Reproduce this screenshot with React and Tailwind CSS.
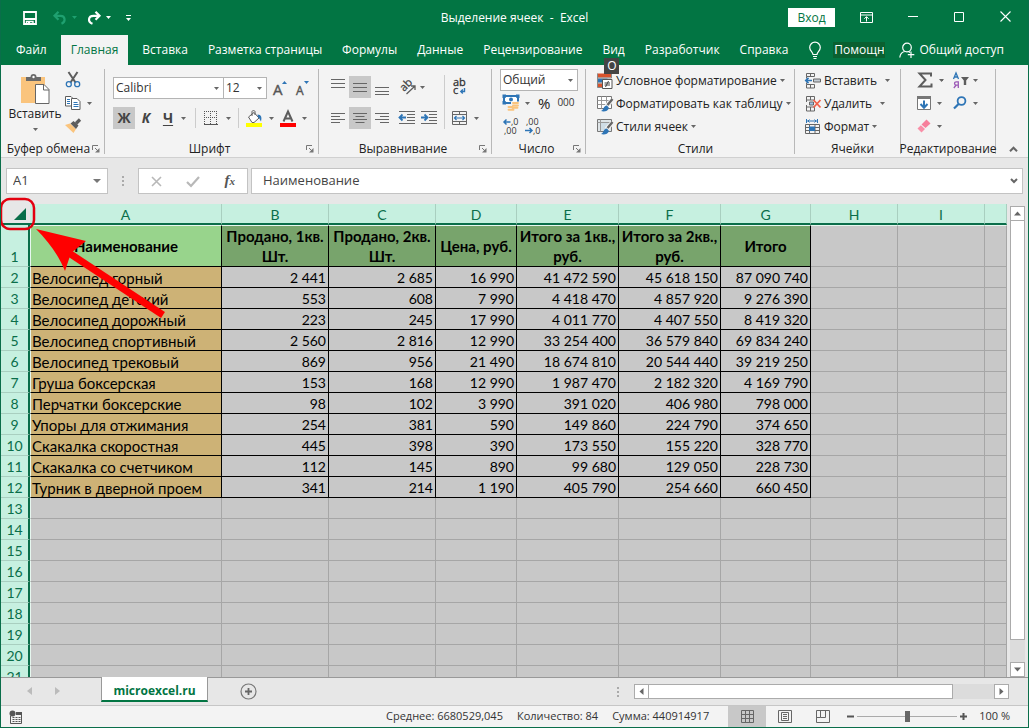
import React from 'react';

const TABS = [
  'Файл',
  'Главная',
  'Вставка',
  'Разметка страницы',
  'Формулы',
  'Данные',
  'Рецензирование',
  'Вид',
  'Разработчик',
  'Справка'
];

const COLUMNS = [
  { key: 'A', width: 'w-[192px]' },
  { key: 'B', width: 'w-[107px]' },
  { key: 'C', width: 'w-[107px]' },
  { key: 'D', width: 'w-[81px]' },
  { key: 'E', width: 'w-[102px]' },
  { key: 'F', width: 'w-[102px]' },
  { key: 'G', width: 'w-[90px]' },
  { key: 'H', width: 'w-[87px]' },
  { key: 'I', width: 'w-[87px]' },
  { key: '', width: '' }
];

const TITLES = [
  'Наименование',
  'Продано, 1кв. Шт.',
  'Продано, 2кв. Шт.',
  'Цена, руб.',
  'Итого за 1кв., руб.',
  'Итого за 2кв., руб.',
  'Итого'
];

const DATA = [
  ['Велосипед горный', '2 441', '2 685', '16 990', '41 472 590', '45 618 150', '87 090 740'],
  ['Велосипед детский', '553', '608', '7 990', '4 418 470', '4 857 920', '9 276 390'],
  ['Велосипед дорожный', '223', '245', '17 990', '4 011 770', '4 407 550', '8 419 320'],
  ['Велосипед спортивный', '2 560', '2 816', '12 990', '33 254 400', '36 579 840', '69 834 240'],
  ['Велосипед трековый', '869', '956', '21 490', '18 674 810', '20 544 440', '39 219 250'],
  ['Груша боксерская', '153', '168', '12 990', '1 987 470', '2 182 320', '4 169 790'],
  ['Перчатки боксерские', '98', '102', '3 990', '391 020', '406 980', '798 000'],
  ['Упоры для отжимания', '254', '381', '590', '149 860', '224 790', '374 650'],
  ['Скакалка скоростная', '445', '398', '390', '173 550', '155 220', '328 770'],
  ['Скакалка со счетчиком', '112', '145', '890', '99 680', '129 050', '228 730'],
  ['Турник в дверной проем', '341', '214', '1 190', '405 790', '254 660', '660 450']
];

const LAST_ROW = 21;

/* ---------- icons ---------- */

function Icon({ w = 16, h = 16, children, className = '' }) {
  return (
    <svg
      width={w}
      height={h}
      viewBox={`0 0 ${w} ${h}`}
      fill="none"
      aria-hidden="true"
      className={'block shrink-0 overflow-visible ' + className}
    >
      {children}
    </svg>
  );
}

function Caret({ className = 'text-[#666]' }) {
  return (
    <Icon w={5} h={3} className={className}>
      <path d="M0 0h5L2.5 3z" fill="currentColor" />
    </Icon>
  );
}

function SaveIcon() {
  return (
    <Icon w={14} h={14}>
      <path d="M1 1h12v12H1z" stroke="#fff" strokeWidth="1.8" />
      <path d="M1 7h12v2H1z" fill="#fff" />
      <path d="M3.5 13.5v-3h6.5v3" stroke="#fff" strokeWidth="1.4" />
      <path d="M5 11h2v2H5z" fill="#fff" />
    </Icon>
  );
}

function UndoIcon() {
  return (
    <Icon w={14} h={14}>
      <path d="M5.5 .8 1.5 4.8l4 4M2 4.8h5.5c5 0 5.5 6 1 8" stroke="#1fa070" strokeWidth="2.2" />
    </Icon>
  );
}

function RedoIcon() {
  return (
    <Icon w={14} h={14}>
      <path d="M8.5 .8 12.5 4.8 8.5 8.8M12 4.8H6.5C1 4.8 .5 10.8 5.5 12.8" stroke="#fff" strokeWidth="2.2" />
    </Icon>
  );
}

function PasteIcon() {
  return (
    <Icon w={28} h={31}>
      <path d="M0 4h24v26H0z" fill="#fac47d" />
      <path d="M5 8V4h4.5a3 3 0 0 1 6 0H20v4z" fill="#6a6a6a" />
      <circle cx="12.5" cy="4" r="1.2" fill="#fff" />
      <path d="M14.5 11.5H23l5 5v14H14.5z" fill="#fff" stroke="#666" />
      <path d="M22.5 11.5V17H28" stroke="#666" />
    </Icon>
  );
}

function CutIcon() {
  return (
    <Icon>
      <path d="M3.5 0 10.5 10.5M12.5 0 5.5 10.5" stroke="#5d5d5d" strokeWidth="2" />
      <circle cx="3.8" cy="12.2" r="2.5" stroke="#2e75b6" strokeWidth="1.3" />
      <circle cx="12.2" cy="12.2" r="2.5" stroke="#2e75b6" strokeWidth="1.3" />
    </Icon>
  );
}

function CopyIcon() {
  return (
    <Icon>
      <path d="M.5 1.5H6l2 2V11H.5z" fill="#fff" stroke="#5d5d5d" />
      <path d="M2 4.5h3M2 6.5h3M2 8.5h3" stroke="#2e75b6" />
      <path d="M6.5 3.5H12l3 3v8H6.5z" fill="#fff" stroke="#5d5d5d" />
      <path d="M8.5 7.5h4M8.5 9.5h5M8.5 11.5h5" stroke="#2e75b6" />
    </Icon>
  );
}

function BrushIcon() {
  return (
    <Icon>
      <path d="M0 7 5 5.5 11 11 8.5 15z" fill="#fac47d" />
      <path d="m5.5 5.500 3-2.500 5 4.500-2.500 3.500z" fill="#5d5d5d" />
      <path d="m11 5.500 4-4" stroke="#5d5d5d" strokeWidth="3.2" />
    </Icon>
  );
}

function GrowFontIcon() {
  return (
    <Icon w={14} h={16}>
      <text x="0" y="15" fontSize="15" fill="#555" stroke="#555" strokeWidth=".4">
        A
      </text>
      <path d="M9 4h5l-2.500-3z" fill="#2e75b6" />
    </Icon>
  );
}

function ShrinkFontIcon() {
  return (
    <Icon w={14} h={16}>
      <text x="1" y="15" fontSize="12" fill="#555" stroke="#555" strokeWidth=".4">
        A
      </text>
      <path d="M9 1h5l-2.500 3z" fill="#2e75b6" />
    </Icon>
  );
}

function BordersIcon() {
  return (
    <Icon w={14} h={14}>
      <path
        d="M0 .5h13M.5 0v13M12.5 0v13M6.5 0v13M0 6.5h13"
        stroke="#555"
        strokeDasharray="1 1"
      />
      <path d="M0 13.5h14" stroke="#555" />
    </Icon>
  );
}

function FillColorIcon() {
  return (
    <Icon w={17} h={17}>
      <path d="M2.5 7 8 2.5 13 8 8 12.5H6z" fill="#fff" stroke="#5d5d5d" />
      <path d="M6 6V1.5C6 .3 9 .3 9 1.5V5" stroke="#5d5d5d" />
      <path d="M11.5 4.5c4 0 4.5 3 3.500 7-1-1-1-3-3-4.500z" fill="#2e75b6" />
      <path d="M0 13h16v4H0z" fill="#ffff00" />
    </Icon>
  );
}

function FontColorIcon() {
  return (
    <Icon w={16} h={17}>
      <path d="M3.5 11.5 8 1.5l4.500 10M5 8.500h6" stroke="#5d5d5d" strokeWidth="2" />
      <path d="M0 13h16v4H0z" fill="#ff0000" />
    </Icon>
  );
}

function LinesIcon({ d }) {
  return (
    <Icon w={14}>
      <path d={d} stroke="#666" />
    </Icon>
  );
}

function OrientationIcon() {
  return (
    <Icon w={17} h={16}>
      <text fontSize="11" fill="#444" stroke="#444" strokeWidth=".3" transform="translate(5 13) rotate(-45)">
        ab
      </text>
      <path d="M7.500 15 15.500 7.500M12 7h4v4" stroke="#5d5d5d" strokeWidth="1.3" />
    </Icon>
  );
}

function WrapIcon() {
  return (
    <Icon w={14} h={16}>
      <text fontSize="11" fill="#333" stroke="#333" strokeWidth=".3">
        <tspan x="0" y="7">
          ab
        </tspan>
        <tspan x="0" y="15">
          c
        </tspan>
      </text>
      <path d="M11.5 9v3.5H8M9.800 10.500l-2 2 2 2" stroke="#2e75b6" strokeWidth="1.4" />
    </Icon>
  );
}

function IndentIcon({ right }) {
  return (
    <Icon>
      <path d="M0 1.5h16M8 4.5h8M8 7.5h8M8 10.5h8M0 13.5h16" stroke="#666" />
      <path
        d={right ? 'M0 7.5h6M3.5 4.5l3 3-3 3' : 'M1 7.5h6M3.5 4.5l-3 3 3 3'}
        stroke="#2e75b6"
        strokeWidth="1.8"
      />
    </Icon>
  );
}

function MergeIcon() {
  return (
    <Icon>
      <path d="M.5 1.5h14v13H.5zM.5 4.5h14M.5 11.5h14M7.5 1.5v3M7.5 11.5v3" stroke="#666" />
      <path d="M2.5 8h10M4.5 6l-2 2 2 2M10.5 6l2 2-2 2" stroke="#2e75b6" strokeWidth="1.2" />
    </Icon>
  );
}

function CurrencyIcon() {
  return (
    <Icon>
      <path d="M1 1h14v7H1z" fill="#fff" stroke="#2e75b6" strokeWidth="2" />
      <path d="M1 3V1h2M13 1h2v2M1 6v2h2" stroke="#2e75b6" strokeWidth="3" />
      <circle cx="8" cy="4.5" r="2" fill="#2e75b6" />
      <path d="M8 6.5h8V15H4v-4h4z" fill="#f3f3f3" />
      <path
        d="M10 8h5M10 10.500h5M5.500 12h4M9.500 12.800h5M5.500 14.800h5"
        stroke="#fac47d"
        strokeWidth="1.9"
        strokeLinecap="round"
      />
    </Icon>
  );
}

function DecimalIcon({ more }) {
  return (
    <Icon>
      <text fontSize="9" fill="#333">
        <tspan x={more ? 8 : 1} y="7">
          {more ? ',0' : ',00'}
        </tspan>
        <tspan x={more ? 1 : 8} y="16">
          {more ? ',00' : ',0'}
        </tspan>
      </text>
      <path
        d={more ? 'M1 4h6.500M3.500 1.500 1 4l2.500 2.500' : 'M0 12.500h7M4.500 10l2.500 2.500L4.500 15'}
        stroke="#2e75b6"
        strokeWidth="1.5"
      />
    </Icon>
  );
}

function ConditionalIcon() {
  return (
    <Icon>
      <path d="M.5 .5h14v4H.5zM.5 10.5h5v4h-5z" fill="#d9532c" />
      <path d="M.5 5.5h10v4H.5z" fill="#2e75b6" />
      <path d="M.5 5h14M.5 10h5M.5 .5v14h5M14.5 1v4" stroke="#888" />
      <path d="M5.5 6.5H15v9H5.5z" fill="#fff" stroke="#555" />
      <path d="M7.5 10H13M7.5 12H13M11.5 8l-3 6" stroke="#444" />
    </Icon>
  );
}

function TableBrushIcon({ filled }) {
  return (
    <Icon>
      <path d="M.5 .5h14v12H.5z" fill={filled ? '#dfe5e8' : '#fff'} stroke="#777" />
      <path
        d={filled ? 'M.5 3.5h14M3.5 .5v12' : 'M.5 4.5h14M.5 8.5h14M4.5 .5v12M9.5 .5v12'}
        stroke="#999"
      />
      {filled ? <path d="M4 4h8v7H4z" fill="#cfdde6" /> : null}
      <path d="m9.500 10 6-6.500" stroke="#f3f3f3" strokeWidth="4.5" />
      <path d="m10.500 9 5-6" stroke="#666" strokeWidth="2.4" />
      <path d="M4 15c2.500-.5 2.500-5.500 6-5.500l2 2.500C11 15.500 6.500 16 4 15z" fill="#2e75b6" />
    </Icon>
  );
}

function InsertCellsIcon() {
  return (
    <Icon>
      <path
        d="M1.500 .5h8v3h-8zM5.500 .5v3M1.500 11.500h8V15h-8zM5.500 11.500V15M1.500 3.500v2M1.500 9.500v2"
        stroke="#666"
      />
      <path d="M8.500 6h7v3h-7z" fill="#c3ccd4" stroke="#666" />
      <path d="M1 7.500h6M3.500 4.800.8 7.500l2.700 2.700" stroke="#2e75b6" strokeWidth="1.7" />
    </Icon>
  );
}

function DeleteCellsIcon() {
  return (
    <Icon>
      <path d="M1.500 .5h8V4h-8zM5.500 .5V4M1.500 11h8v4h-8zM5.500 11v4M1.500 4v2M1.500 9v2" stroke="#666" />
      <path d="M4.500 6h4v3h-4z" fill="#9dc3e6" stroke="#666" />
      <path d="m8.500 4 7 7.500M15.500 4l-7 7.500" stroke="#f0614a" strokeWidth="1.8" />
    </Icon>
  );
}

function FormatCellsIcon() {
  return (
    <Icon>
      <path
        d="M1.500 0v4M12.500 0v4M2 2h10M4.500 .5 3 2l1.500 1.500M9.500 .5 11 2 9.500 3.500"
        stroke="#2e75b6"
      />
      <path d="M.5 5.500h14v9H.5zM.5 8.500h14M.5 11.500h14M4.500 5.500v9M10 5.500v9" stroke="#666" />
      <path d="M4 7.500h6V12H4z" fill="#2e75b6" />
    </Icon>
  );
}

function SumIcon() {
  return (
    <Icon>
      <path d="M14 4.500v-3H2.500L8.500 8l-6 6.500h12v-3" stroke="#5d5d5d" strokeWidth="2" />
    </Icon>
  );
}

function SortFilterIcon() {
  return (
    <Icon>
      <path d="M.5 7 3 1l2.500 6M1.500 5h3" stroke="#2e75b6" strokeWidth="1.3" />
      <path
        d="M5.300 16V9.800H3.200a1.600 1.600 0 0 0 0 3.300h2M3.300 13 .8 16"
        stroke="#9b59b6"
        strokeWidth="1.3"
      />
      <path d="M8 5h8l-2.800 3.500V13h-2.400V8.500z" fill="#5d5d5d" />
    </Icon>
  );
}

function FillDownIcon() {
  return (
    <Icon w={14}>
      <path d="M.5 1.500h13v13H.5z" fill="#fff" stroke="#777" />
      <path d="M0 1h14v3H0z" fill="#777" />
      <path d="M7 5.500v7M3.500 9 7 12.700 10.500 9" stroke="#2e75b6" strokeWidth="2" />
    </Icon>
  );
}

function FindIcon() {
  return (
    <Icon w={14}>
      <circle cx="8.5" cy="6" r="3.9" stroke="#2e75b6" strokeWidth="1.8" />
      <path d="M5.800 8.800 1 13.500" stroke="#2e75b6" strokeWidth="2.2" />
    </Icon>
  );
}

function EraserIcon() {
  return (
    <Icon w={14}>
      <path d="M4.500 6.500 9.500 1.500 13.500 5.500 8.500 10z" fill="#f77f9b" />
      <path d="M3.900 7.200.5 10.500l4 4L8 11z" fill="#f98fa8" />
    </Icon>
  );
}

function DialogLauncher({ label }) {
  return (
    <button type="button" aria-label={label}>
      <Icon w={8} h={8}>
        <path d="M.5 5V.5H6M3 3l3.500 3.500" stroke="#777" />
        <path d="M7.500 3v4.500H3z" fill="#777" />
      </Icon>
    </button>
  );
}

/* ---------- small controls ---------- */

function IconButton({ label, children, caret = false, active = false, gap = 'gap-[6px]', className = '' }) {
  return (
    <button
      type="button"
      aria-label={label}
      className={
        'flex h-[22px] shrink-0 items-center justify-center ' +
        gap +
        ' ' +
        (active ? 'bg-[#c8c8c8] ' : '') +
        className
      }
    >
      {children}
      {caret ? <Caret /> : null}
    </button>
  );
}

function Combo({ label, value, className }) {
  return (
    <div
      className={
        'flex h-[22px] shrink-0 items-center border border-[#b4b4b4] bg-white pr-1 ' + className
      }
    >
      <select
        aria-label={label}
        defaultValue={value}
        className="min-w-0 flex-1 appearance-none bg-transparent pl-[2px] text-[#333] outline-none"
      >
        <option>{value}</option>
      </select>
      <Caret />
    </div>
  );
}

function TextCommand({ icon, label, wide = false }) {
  return (
    <button type="button" className="flex h-[23px] items-center whitespace-nowrap">
      {icon}
      <span className="ml-[3px]">{label}</span>
      <span className={wide ? 'ml-2' : 'ml-[3px]'}>
        <Caret />
      </span>
    </button>
  );
}

function Group({ title, launcher, className, children }) {
  return (
    <section className={'flex shrink-0 flex-col border-r border-[#b8b8b8] ' + className}>
      <div className="flex-1">{children}</div>
      <div className="flex h-[10px] items-center justify-center">
        <h2 className="grow text-center leading-[10px] whitespace-nowrap">{title}</h2>
        {launcher ? <DialogLauncher label={'Параметры: ' + title} /> : null}
      </div>
    </section>
  );
}

/* ---------- window parts ---------- */

function TitleBar() {
  return (
    <header className="grid h-[35px] grid-cols-[1fr_auto_1fr] items-center text-white">
      <div className="flex items-center pl-[22px]">
        <button type="button" aria-label="Сохранить">
          <SaveIcon />
        </button>
        <button type="button" aria-label="Отменить" className="ml-4 flex items-center gap-[5px]">
          <UndoIcon />
          <Caret className="text-[#1fa070]" />
        </button>
        <button type="button" aria-label="Вернуть" className="ml-[10px] flex items-center gap-[5px]">
          <RedoIcon />
          <Caret className="text-white" />
        </button>
        <button type="button" aria-label="Настройка панели" className="ml-[15px]">
          <Icon w={5} h={6}>
            <path d="M0 .5h5" stroke="#fff" />
            <path d="M0 3h5L2.500 6z" fill="#fff" />
          </Icon>
        </button>
      </div>
      <h1 className="whitespace-pre">Выделение ячеек  -  Excel</h1>
      <div className="flex h-full items-center justify-end">
        <button type="button" className="mr-[9px] h-[19px] w-[47px] bg-white text-[#027543]">
          Вход
        </button>
        <button type="button" aria-label="Лента" className="flex h-full w-[46px] items-center justify-center">
          <Icon w={14} h={12}>
            <path d="M.5 .5h12v10H.5zM.5 3h12M6.500 9.500V5M4.300 6.800 6.500 4.600l2.200 2.200" stroke="#fff" />
          </Icon>
        </button>
        <button type="button" aria-label="Свернуть" className="flex h-full w-[46px] items-center justify-center">
          <Icon w={10} h={12}>
            <path d="M0 4.500h10" stroke="#fff" />
          </Icon>
        </button>
        <button type="button" aria-label="Развернуть" className="flex h-full w-[46px] items-center justify-center">
          <Icon w={10} h={12}>
            <path d="M.5 .5h9v9h-9z" stroke="#fff" />
          </Icon>
        </button>
        <button type="button" aria-label="Закрыть" className="flex h-full w-[46px] items-center justify-center">
          <Icon w={11} h={13}>
            <path d="m.5 .5 10 10M10.500 .5l-10 10" stroke="#fff" strokeWidth="1.1" />
          </Icon>
        </button>
      </div>
    </header>
  );
}

function TabBar() {
  return (
    <nav className="flex h-[30px] items-stretch pl-[5px] whitespace-nowrap text-white">
      {TABS.map((tab) => (
        <a
          key={tab}
          href="#"
          className={
            'relative flex items-center px-[10px] ' +
            (tab === 'Главная' ? 'mx-1 bg-[#f3f3f3] text-[#027543]' : '')
          }
        >
          {tab}
          {tab === 'Вид' ? (
            <kbd className="absolute top-[23px] left-3 z-10 flex h-4 w-[15px] items-center justify-center bg-[#444] font-[inherit] text-white">
              О
            </kbd>
          ) : null}
        </a>
      ))}
      <label className="ml-[11px] flex items-center gap-3">
        <Icon w={12} h={17}>
          <path
            d="M4 12.500c0-2.500-3.300-3.500-3.300-7a5.300 5.300 0 0 1 10.600 0c0 3.500-3.300 4.500-3.300 7zM4 14.500h4M4.500 16.500h3"
            stroke="#fff"
            strokeWidth="1.2"
          />
        </Icon>
        <input
          aria-label="Помощник"
          defaultValue="Помощн"
          className="h-4 w-[52px] bg-[#0a6030] px-px text-white outline-none"
        />
      </label>
      <button type="button" className="mr-6 ml-auto flex items-center gap-1">
        <Icon>
          <circle cx="8" cy="5.5" r="4.3" stroke="#fff" strokeWidth="1.2" />
          <path
            d="M.8 15.500c.4-3.500 2.200-5.500 5-6M9.500 9.500l1.500 1M12 9.500V16M8.800 12.700h6.500"
            stroke="#fff"
            strokeWidth="1.2"
          />
        </Icon>
        Общий доступ
      </button>
    </nav>
  );
}

function Ribbon() {
  return (
    <div className="flex h-[93px] items-stretch border-b border-[#d0d0d0] bg-[#f3f3f3] pt-1 pb-[3px] text-[#222]">
      <Group title="Буфер обмена" launcher className="w-[104px] pr-1 pl-1">
        <div className="flex justify-between">
          <button type="button" className="flex w-[60px] flex-col items-center pt-1">
            <PasteIcon />
            <span className="leading-[20px]">Вставить</span>
            <span className="mt-1">
              <Caret />
            </span>
          </button>
          <div className="flex flex-1 flex-col items-start">
            <IconButton label="Вырезать">
              <CutIcon />
            </IconButton>
            <IconButton label="Копировать" caret className="mt-[1px]">
              <CopyIcon />
            </IconButton>
            <IconButton label="Формат по образцу" className="mt-[1px]">
              <BrushIcon />
            </IconButton>
          </div>
        </div>
      </Group>

      <Group title="Шрифт" launcher className="w-[214px] pr-1 pl-2">
        <div className="flex pt-2">
          <Combo label="Шрифт" value="Calibri" className="w-[111px]" />
          <Combo label="Размер" value="12" className="w-[43px] border-l-0" />
          <IconButton label="Увеличить размер" className="ml-[2px] w-[22px]">
            <GrowFontIcon />
          </IconButton>
          <IconButton label="Уменьшить размер" className="w-[22px]">
            <ShrinkFontIcon />
          </IconButton>
        </div>
        <div className="flex items-center pt-2 text-sm font-bold text-[#444]">
          <IconButton label="Полужирный" active className="w-[22px]">
            Ж
          </IconButton>
          <IconButton label="Курсив" className="w-[22px] italic">
            К
          </IconButton>
          <IconButton label="Подчеркнутый" caret gap="gap-2" className="w-[35px]">
            <span className="underline underline-offset-2">Ч</span>
          </IconButton>
          <span className="mr-2 ml-[3px] h-5 w-px bg-[#ccc]" />
          <IconButton label="Границы" caret gap="gap-2">
            <BordersIcon />
          </IconButton>
          <span className="mx-[7px] h-5 w-px bg-[#ccc]" />
          <IconButton label="Цвет заливки" caret>
            <FillColorIcon />
          </IconButton>
          <IconButton label="Цвет текста" caret className="ml-[6px]">
            <FontColorIcon />
          </IconButton>
        </div>
      </Group>

      <Group title="Выравнивание" launcher className="w-[173px] pr-1 pl-2">
        <div className="flex">
          <div className="pt-[7px]">
            <div className="flex">
              <IconButton label="По верхнему краю" className="w-[22px]">
                <LinesIcon d="M0 .5h14M0 4.500h14M0 8.500h14" />
              </IconButton>
              <IconButton label="По середине" active className="w-[22px]">
                <LinesIcon d="M0 4.500h14M0 8.500h14M0 12.500h14" />
              </IconButton>
              <IconButton label="По нижнему краю" className="w-[22px]">
                <LinesIcon d="M0 8.500h14M0 12.500h14M0 15.500h14" />
              </IconButton>
              <IconButton label="Ориентация" caret gap="gap-1" className="ml-[6px]">
                <OrientationIcon />
              </IconButton>
            </div>
            <div className="flex pt-[9px]">
              <IconButton label="По левому краю" className="w-[22px]">
                <LinesIcon d="M0 3.500h14M0 6.500h9M0 9.500h14M0 12.500h9" />
              </IconButton>
              <IconButton label="По центру" active className="w-[22px]">
                <LinesIcon d="M0 3.500h14M2.500 6.500h9M0 9.500h14M2.500 12.500h9" />
              </IconButton>
              <IconButton label="По правому краю" className="w-[22px]">
                <LinesIcon d="M0 3.500h14M5 6.500h9M0 9.500h14M5 12.500h9" />
              </IconButton>
              <IconButton label="Уменьшить отступ" className="ml-[3px] w-[22px]">
                <IndentIcon />
              </IconButton>
              <IconButton label="Увеличить отступ" className="w-[22px]">
                <IndentIcon right />
              </IconButton>
            </div>
          </div>
          <span className="mt-[6px] ml-1 w-px bg-[#ccc]" />
          <div className="flex flex-col items-start pt-[7px] pl-[7px]">
            <IconButton label="Перенести текст" className="w-4">
              <WrapIcon />
            </IconButton>
            <IconButton label="Объединить" caret className="mt-[9px]">
              <MergeIcon />
            </IconButton>
          </div>
        </div>
      </Group>

      <Group title="Число" launcher className="w-[94px] pr-1 pl-2">
        <Combo label="Числовой формат" value="Общий" className="w-[78px]" />
        <div className="flex pt-[1px] pl-[3px]">
          <IconButton label="Денежный формат" caret>
            <CurrencyIcon />
          </IconButton>
          <IconButton label="Процентный формат" className="ml-2 text-[15px]">
            %
          </IconButton>
          <IconButton label="Формат с разделителями" className="ml-[7px] text-[10px] text-[#333]">
            000
          </IconButton>
        </div>
        <div className="flex gap-[6px] pt-[1px] pl-[3px]">
          <IconButton label="Увеличить разрядность">
            <DecimalIcon more />
          </IconButton>
          <IconButton label="Уменьшить разрядность">
            <DecimalIcon />
          </IconButton>
        </div>
      </Group>

      <Group title="Стили" className="w-[209px] pl-[11px]">
        <TextCommand icon={<ConditionalIcon />} label="Условное форматирование" />
        <TextCommand icon={<TableBrushIcon />} label="Форматировать как таблицу" />
        <TextCommand icon={<TableBrushIcon filled />} label="Стили ячеек" />
      </Group>

      <Group title="Ячейки" className="w-[106px] pl-[10px]">
        <TextCommand icon={<InsertCellsIcon />} label="Вставить" wide />
        <TextCommand icon={<DeleteCellsIcon />} label="Удалить" wide />
        <TextCommand icon={<FormatCellsIcon />} label="Формат" />
      </Group>

      <Group title="Редактирование" className="w-[95px]">
        <div className="flex gap-[9px] pl-4">
          <div>
            <IconButton label="Сумма" caret>
              <SumIcon />
            </IconButton>
            <IconButton label="Заполнить" caret className="mt-[1px]">
              <FillDownIcon />
            </IconButton>
            <IconButton label="Очистить" caret className="mt-[1px]">
              <EraserIcon />
            </IconButton>
          </div>
          <div>
            <IconButton label="Сортировка и фильтр" caret gap="gap-1">
              <SortFilterIcon />
            </IconButton>
            <IconButton label="Найти и выделить" caret className="mt-[1px]">
              <FindIcon />
            </IconButton>
          </div>
        </div>
      </Group>

      <button type="button" aria-label="Свернуть ленту" className="mr-[10px] mb-[2px] ml-auto self-end">
        <Icon w={9} h={6}>
          <path d="M1 5.200 4.500 1.700 8 5.200" stroke="#666" strokeWidth="2" />
        </Icon>
      </button>
    </div>
  );
}

function Grip() {
  return (
    <Icon w={2} h={12}>
      <path d="M1 1v10" stroke="#aaa" strokeWidth="2" strokeDasharray="2 2" />
    </Icon>
  );
}

function FormulaBar() {
  return (
    <div className="flex h-[46px] items-center bg-[#e7e7e7] px-[5px] text-[13px] text-[#444]">
      <div className="flex h-[26px] w-[102px] items-center border border-[#c3c3c3] bg-white pr-[6px]">
        <input aria-label="Поле имени" defaultValue="A1" className="min-w-0 flex-1 pl-[6px] outline-none" />
        <Icon w={8} h={4} className="text-[#777]">
          <path d="M0 0h8L4 4z" fill="currentColor" />
        </Icon>
      </div>
      <span className="mx-[14px]">
        <Grip />
      </span>
      <div className="flex h-[26px] w-[110px] items-center justify-between border border-[#c3c3c3] bg-white px-3">
        <button type="button" aria-label="Отмена">
          <Icon w={11} h={11}>
            <path d="m1 1 9 9M10 1l-9 9" stroke="#b8b8b8" strokeWidth="1.6" />
          </Icon>
        </button>
        <button type="button" aria-label="Ввод">
          <Icon w={14} h={11}>
            <path d="m1 6 4 4 8-9" stroke="#b8b8b8" strokeWidth="2.2" />
          </Icon>
        </button>
        <button
          type="button"
          className="font-['Liberation_Serif',serif] text-[15px] font-bold text-[#555] italic"
        >
          f<span className="text-[11px]">x</span>
        </button>
      </div>
      <div className="ml-[3px] flex h-[26px] flex-1 items-center border border-[#c3c3c3] bg-white pr-1">
        <input
          aria-label="Строка формул"
          defaultValue="Наименование"
          className="min-w-0 flex-1 pl-[11px] outline-none"
        />
        <Icon w={8} h={6}>
          <path d="m1 1 3 3 3-3" stroke="#666" strokeWidth="2" />
        </Icon>
      </div>
    </div>
  );
}

function cellClass(row, col) {
  const edge = col === 0 ? ' border-l border-l-[#e6f7ef]' : '';
  if (row > DATA.length + 1 || col > 6) {
    return 'bg-[#c8c8c8] p-0 border-r border-b border-[#a6a6a6]' + edge;
  }
  if (row === 1) {
    return (
      'border-r border-b border-black p-0 text-center align-middle text-[15px] font-bold leading-[20px] ' +
      (col === 0 ? 'bg-[#98d48c]' : 'bg-[#78a46c]') +
      edge
    );
  }
  return (
    'border-r border-b border-black whitespace-nowrap pt-[2px] pb-0 leading-[18px] ' +
    (col === 0 ? 'bg-[#cdb276] pr-0 pl-px text-left text-[15px]' : 'bg-[#c8c8c8] pr-[2px] pl-0 text-right') +
    edge
  );
}

function cellText(row, col) {
  if (row === 1) return TITLES[col];
  const line = DATA[row - 2];
  return line ? line[col] : null;
}

function SheetTable() {
  const rows = Array.from({ length: LAST_ROW }, (_, i) => i + 1);
  return (
    <table className="w-full table-fixed border-separate border-spacing-0 font-[Lato,'Noto_Sans',sans-serif] text-sm text-black">
      <thead>
        <tr className="h-[21px] text-[#0a6e4a]">
          <th scope="col" className="w-[29px] border-b-2 border-[#0a6e4a] bg-[#e7e7e7] p-0">
            <button type="button" aria-label="Выделить все" className="flex w-full justify-end pr-1">
              <Icon w={12} h={12}>
                <path d="M12 0v12H0z" fill="#0a6e4a" />
              </Icon>
            </button>
          </th>
          {COLUMNS.map(({ key, width }, i) => (
            <th
              key={i}
              scope="col"
              className={
                'border-r border-b-2 border-r-[#a9cfc0] border-b-[#0a6e4a] bg-[#c6f0e0] px-0 pt-[2px] pb-0 leading-[17px] font-normal ' +
                width
              }
            >
              {key}
            </th>
          ))}
        </tr>
      </thead>
      <tbody>
        {rows.map((row) => (
          <tr key={row} className={row === 1 ? 'h-[42px]' : 'h-[21px]'}>
            <th
              scope="row"
              className="border-r-2 border-b border-r-[#0a6e4a] border-b-[#a9cfc0] bg-[#c6f0e0] px-0 pt-[2px] pb-0 align-bottom leading-[18px] font-normal text-[#0a6e4a]"
            >
              {row}
            </th>
            {COLUMNS.map((c, col) => (
              <td
                key={col}
                className={(row === 1 ? 'border-t border-t-[#e6f7ef] ' : '') + cellClass(row, col)}
              >
                {cellText(row, col)}
              </td>
            ))}
          </tr>
        ))}
      </tbody>
    </table>
  );
}

function ScrollArrow({ label, d }) {
  return (
    <button
      type="button"
      aria-label={label}
      className="flex h-[15px] w-[15px] shrink-0 items-center justify-center border border-[#ababab] bg-white"
    >
      <Icon w={7} h={7}>
        <path d={d} fill="#666" />
      </Icon>
    </button>
  );
}

function Sheet() {
  return (
    <main className="relative flex min-h-0 flex-1 bg-[#e7e7e7]">
      <div className="min-w-0 flex-1 overflow-hidden">
        <SheetTable />
      </div>
      <div className="flex w-[21px] flex-col items-center pt-[2px]">
        <ScrollArrow label="Вверх" d="M0 5.500h7L3.500 1.500z" />
        <div className="-mt-px w-[15px] flex-1 bg-[#dcdcdc] pb-[22px]">
          <div className="h-full border border-[#ababab] bg-white" />
        </div>
        <ScrollArrow label="Вниз" d="M0 1.500h7L3.500 5.500z" />
      </div>
      {/* pointer to the select-all corner */}
      <svg
        width="170"
        height="126"
        viewBox="0 0 170 126"
        fill="none"
        aria-hidden="true"
        className="pointer-events-none absolute -top-2 left-0"
      >
        <rect x="0" y="3" width="33" height="30" rx="9" stroke="#e3000f" strokeWidth="2.5" />
        <path d="M68 57 162 119" stroke="#ff0000" strokeWidth="7" />
        <path d="M35 33 85 45 70 57 64 75C58 60 48 46 35 33z" fill="#ff0000" />
      </svg>
    </main>
  );
}

function SheetTabs() {
  return (
    <div className="flex h-[28px] items-start border-t border-[#999] bg-[#e7e7e7]">
      <div className="flex w-[100px] shrink-0 items-center gap-[23px] pt-[9px] pl-[26px]">
        <button type="button" aria-label="Предыдущий лист">
          <Icon w={5} h={8}>
            <path d="M5 0v8L0 4z" fill="#bbb" />
          </Icon>
        </button>
        <button type="button" aria-label="Следующий лист">
          <Icon w={5} h={8}>
            <path d="M0 0v8l5-4z" fill="#bbb" />
          </Icon>
        </button>
      </div>
      <a
        href="#"
        className="-mt-px flex h-[25px] w-[107px] items-center justify-center border-r border-b-2 border-l border-[#999] border-b-[#027543] bg-white pt-1 font-bold text-[#027543]"
      >
        microexcel.ru
      </a>
      <button type="button" aria-label="Новый лист" className="mt-[5px] ml-8">
        <Icon w={17} h={17}>
          <circle cx="8.5" cy="8.5" r="7.5" stroke="#777" strokeWidth="1.2" />
          <path d="M8.500 5v7M5 8.500h7" stroke="#666" strokeWidth="1.8" />
        </Icon>
      </button>
      <div className="mt-[6px] mr-[19px] ml-auto flex w-[392px] items-center">
        <span className="mr-[15px] flex-none">
          <Grip />
        </span>
        <ScrollArrow label="Влево" d="M5.500 0v7L1.500 3.500z" />
        <div className="-ml-px h-[15px] flex-1 bg-[#dcdcdc] pr-[41px]">
          <div className="h-full border border-[#ababab] bg-white" />
        </div>
        <ScrollArrow label="Вправо" d="M1.500 0v7L5.500 3.500z" />
      </div>
    </div>
  );
}

function StatusBar() {
  return (
    <footer className="flex h-[22px] items-center border-t border-[#c6c6c6] bg-[#f3f3f3] text-[11px] whitespace-nowrap text-[#333]">
      <button type="button" aria-label="Запись макроса" className="ml-2">
        <Icon w={14} h={14}>
          <path d="M1.500 6v7.500h11v-11H7" stroke="#555" />
          <path d="M7 2h6v3H7z" fill="#555" />
          <circle cx="3.5" cy="3.5" r="3" fill="#555" />
          <path d="M3.500 7.500h8M3.500 9.500h8M3.500 11.500h8" stroke="#555" strokeDasharray="2 1" />
        </Icon>
      </button>
      <div className="ml-auto flex gap-[14px] pr-[19px]">
        <span>Среднее: 6680529,045</span>
        <span>Количество: 84</span>
        <span>Сумма: 440914917</span>
      </div>
      <button type="button" aria-label="Обычный" className="flex h-full w-[38px] items-center justify-center bg-[#c8c8c8]">
        <Icon w={13} h={13}>
          <path d="M.5 .5h12v12H.5zM.5 4.500h12M.5 8.500h12M4.500 .5v12M8.500 .5v12" stroke="#666" />
        </Icon>
      </button>
      <button type="button" aria-label="Разметка страницы" className="flex h-full w-[38px] items-center justify-center">
        <Icon w={14} h={13}>
          <path d="M.5 .5h13v12H.5zM3.500 2.500h7v8h-7zM5 4.500h4M5 6.500h4M5 8.500h4" stroke="#666" />
        </Icon>
      </button>
      <button type="button" aria-label="Страничный" className="flex h-full w-[38px] items-center justify-center">
        <Icon w={14} h={13}>
          <path d="M.5 .5h13v12H.5zM4.500 .5v7M9.500 .5v7M4.500 7.500h5M.5 7.500h4" stroke="#666" />
        </Icon>
      </button>
      <button type="button" aria-label="Уменьшить" className="ml-[5px]">
        <Icon w={7} h={7}>
          <path d="M0 3.500h7" stroke="#555" strokeWidth="2" />
        </Icon>
      </button>
      <input
        type="range"
        aria-label="Масштаб"
        min="0"
        max="200"
        defaultValue="100"
        className="mx-[3px] h-[11px] w-[100px] appearance-none bg-[linear-gradient(#aaa,#aaa)] bg-[length:100%_1px] bg-center bg-no-repeat [&::-webkit-slider-thumb]:h-[11px] [&::-webkit-slider-thumb]:w-[5px] [&::-webkit-slider-thumb]:appearance-none [&::-webkit-slider-thumb]:bg-[#666]"
      />
      <button type="button" aria-label="Увеличить">
        <Icon w={7} h={7}>
          <path d="M0 3.500h7M3.500 0v7" stroke="#555" strokeWidth="2" />
        </Icon>
      </button>
      <span className="mr-[18px] ml-3">100 %</span>
    </footer>
  );
}

export default function App() {
  return (
    <div className="flex h-screen flex-col overflow-hidden border-r border-b border-l border-[#0a6e4a] bg-[#027543] font-['Open_Sans','Noto_Sans',sans-serif] text-xs">
      <TitleBar />
      <TabBar />
      <Ribbon />
      <FormulaBar />
      <Sheet />
      <SheetTabs />
      <StatusBar />
    </div>
  );
}
